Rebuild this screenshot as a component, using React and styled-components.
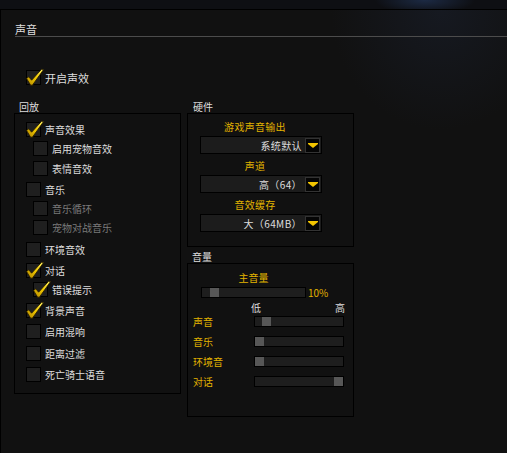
import React, { useId } from 'react';
import styled, { createGlobalStyle } from 'styled-components';

const GlobalStyle = createGlobalStyle`
  html, body { margin: 0; padding: 0; background: #0d0e12; }
  body { font-family: "Noto Sans CJK SC", "Noto Sans", sans-serif; }
  * { box-sizing: border-box; }
`;

const GOLD = '#e2b300';
const TEXT = '#dedede';

const Screen = styled.div`
  width: 507px;
  height: 453px;
  overflow: hidden;
  display: flex;
  flex-direction: column;
  background:
    radial-gradient(ellipse 50px 14px at 425px 0px, #1c2a44 0%, rgba(28, 42, 68, 0) 100%),
    #0e0f13;
`;

const TopStrip = styled.div`
  height: 9px;
  flex: none;
`;

const Panel = styled.div`
  flex: 1;
  border-top: 1px solid #000;
  border-left: 1px solid #000;
  background:
    radial-gradient(ellipse 110px 120px at 440px 0px, rgba(26, 32, 46, 0.55), rgba(17, 17, 17, 0) 100%),
    #111111;
  padding-left: 13px;
  display: flex;
  flex-direction: column;
`;

const Header = styled.div`
  margin-left: 1px;
  padding-top: 12px;
  line-height: 14px;
  font-size: 11px;
  color: ${TEXT};
  border-bottom: 1px solid #4c4c4c;
`;

const MasterRow = styled.div`
  margin-top: 33px;
  margin-left: 12px;
`;

const Row = styled.div`
  display: flex;
  align-items: center;
  height: 15px;
  gap: 4px;
  margin-top: ${p => p.$first ? 0 : p.$level ? 4.3 : 6.2}px;
  margin-left: ${p => p.$level ? 7 : 0}px;
  font-size: ${p => p.$big ? 11 : 10}px;
  color: ${p => p.$disabled ? '#7a7a7a' : TEXT};
  white-space: nowrap;
`;

const Box = styled.span`
  position: relative;
  flex: none;
  width: 15px;
  height: 15px;
  background: #1f1f1f;
  border: 1px solid #000;
`;

const CheckSvg = styled.svg`
  position: absolute;
  left: -2px;
  top: -4px;
  overflow: visible;
`;

const Columns = styled.div`
  display: flex;
  gap: 6px;
  margin-top: 15px;
  align-items: flex-start;
`;

const Group = styled.div`
  width: 167px;
  margin-top: ${p => p.$mt || 0}px;
`;

const GroupLabel = styled.div`
  height: 13px;
  line-height: 13px;
  font-size: 10px;
  padding-left: ${p => p.$pl || 5}px;
  color: ${TEXT};
`;

const GroupBox = styled.div`
  height: ${p => p.$h}px;
  border: 1px solid #000;
  padding: ${p => p.$pad};
  display: flex;
  flex-direction: column;
`;

const RightColumn = styled.div`
  display: flex;
  flex-direction: column;
`;

const FieldLabel = styled.div`
  width: 110px;
  margin-left: 12px;
  margin-top: ${p => p.$first ? 0 : 6}px;
  text-align: center;
  line-height: 12px;
  font-size: 10px;
  color: ${GOLD};
  letter-spacing: 0.3px;
`;

const Dropdown = styled.div`
  width: 122px;
  height: 18px;
  margin-left: 12px;
  margin-top: 3px;
  border: 1px solid #000;
  background: #1c1c1c;
  display: flex;
  align-items: center;
  justify-content: flex-end;
  gap: 3px;
  padding-right: 1px;
  font-size: 10px;
  color: ${TEXT};
  letter-spacing: 0.4px;
`;

const DropButton = styled.span`
  width: 15px;
  height: 15px;
  background: #050505;
  border: 1px solid #333;
  display: flex;
  align-items: center;
  justify-content: center;
`;

const MasterLabel = styled.div`
  width: 105px;
  margin-left: 8px;
  line-height: 12px;
  text-align: center;
  font-size: 10px;
  color: ${GOLD};
`;

const MasterSlider = styled.div`
  display: flex;
  align-items: center;
  margin-left: 8px;
  margin-top: 3px;
  gap: 2px;
  font-size: 10px;
  color: ${GOLD};
  line-height: 11px;
`;

const Track = styled.div`
  position: relative;
  width: ${p => p.$w}px;
  height: 11px;
  border: 1px solid #000;
  background: #1e1e1e;
`;

const Thumb = styled.span`
  position: absolute;
  top: 0;
  bottom: 0;
  width: 9px;
  background: #575757;
`;

const Scale = styled.div`
  display: flex;
  justify-content: space-between;
  width: 94px;
  margin-left: 58px;
  margin-top: 4px;
  line-height: 12px;
  font-size: 10px;
  color: ${TEXT};
`;

const SliderRow = styled.div`
  display: flex;
  align-items: center;
  height: 11px;
  margin-top: ${p => p.$first ? 2 : 9}px;
  font-size: 10px;
  color: ${GOLD};
`;

const SliderLabel = styled.span`
  width: 61px;
  flex: none;
`;

function Check() {
  const id = useId();
  return (
    <CheckSvg width="20" height="19" viewBox="0 0 20 19">
      <defs>
        <linearGradient id={id} x1="0" y1="1" x2="1" y2="0">
          <stop offset="0" stopColor="#b08400" />
          <stop offset="0.5" stopColor="#f0c800" />
          <stop offset="1" stopColor="#fff36a" />
        </linearGradient>
      </defs>
      <polygon
        points="1.5,11.5 3.8,9.8 6.6,13.2 16.6,2.2 18.6,2.6 7.4,18.2 5.6,18.2"
        fill={`url(#${id})`}
        stroke="#2a1f00"
        strokeWidth="0.9"
        strokeLinejoin="round"
      />
    </CheckSvg>
  );
}

function CheckOption({ label, checked, level, disabled, first, big }) {
  return (
    <Row $level={level} $disabled={disabled} $first={first} $big={big}>
      <Box>{checked && <Check />}</Box>
      <span>{label}</span>
    </Row>
  );
}

function Select({ value }) {
  return (
    <Dropdown>
      <span>{value}</span>
      <DropButton>
        <svg width="10" height="5" viewBox="0 0 10 5">
          <polygon points="0,0 10,0 10,1 5,5 0,1" fill="#f2c400" />
        </svg>
      </DropButton>
    </Dropdown>
  );
}

function Slider({ width, value }) {
  return (
    <Track $w={width}>
      <Thumb style={{ left: `calc((100% - 9px) * ${value})` }} />
    </Track>
  );
}

const playback = [
  { label: '声音效果', checked: true, level: 0 },
  { label: '启用宠物音效', level: 1 },
  { label: '表情音效', level: 1 },
  { label: '音乐', level: 0 },
  { label: '音乐循环', level: 1, disabled: true },
  { label: '宠物对战音乐', level: 1, disabled: true },
  { label: '环境音效', level: 0 },
  { label: '对话', checked: true, level: 0 },
  { label: '错误提示', checked: true, level: 1 },
  { label: '背景声音', checked: true, level: 0 },
  { label: '启用混响', level: 0 },
  { label: '距离过滤', level: 0 },
  { label: '死亡骑士语音', level: 0 },
];

const hardware = [
  { label: '游戏声音输出', value: '系统默认' },
  { label: '声道', value: '高（64）' },
  { label: '音效缓存', value: '大（64MB）' },
];

const volumes = [
  { label: '声音', value: 0.09 },
  { label: '音乐', value: 0 },
  { label: '环境音', value: 0 },
  { label: '对话', value: 1 },
];

export default function App() {
  return (
    <Screen>
      <GlobalStyle />
      <TopStrip />
      <Panel>
        <Header>声音</Header>
        <MasterRow>
          <CheckOption label="开启声效" checked first big />
        </MasterRow>
        <Columns>
          <Group>
            <GroupLabel $pl={5}>回放</GroupLabel>
            <GroupBox $h={281} $pad="8px 0 0 11px">
              {playback.map((o, i) => (
                <CheckOption key={o.label + i} {...o} first={i === 0} />
              ))}
            </GroupBox>
          </Group>
          <RightColumn>
            <Group>
              <GroupLabel $pl={6}>硬件</GroupLabel>
              <GroupBox $h={134} $pad="7px 0 0 0">
                {hardware.map((h, i) => (
                  <React.Fragment key={h.label}>
                    <FieldLabel $first={i === 0}>{h.label}</FieldLabel>
                    <Select value={h.value} />
                  </React.Fragment>
                ))}
              </GroupBox>
            </Group>
            <Group $mt={3}>
              <GroupLabel $pl={5}>音量</GroupLabel>
              <GroupBox $h={154} $pad="8px 0 0 5px">
                <MasterLabel>主音量</MasterLabel>
                <MasterSlider>
                  <Slider width={105} value={0.085} />
                  <span>10%</span>
                </MasterSlider>
                <Scale>
                  <span>低</span>
                  <span>高</span>
                </Scale>
                {volumes.map((v, i) => (
                  <SliderRow key={v.label} $first={i === 0}>
                    <SliderLabel>{v.label}</SliderLabel>
                    <Slider width={90} value={v.value} />
                  </SliderRow>
                ))}
              </GroupBox>
            </Group>
          </RightColumn>
        </Columns>
      </Panel>
    </Screen>
  );
}
